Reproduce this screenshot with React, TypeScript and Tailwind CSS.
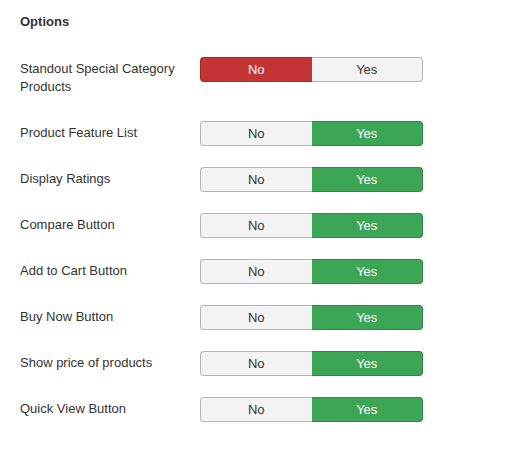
import React from "react";

type Row = { label: string; value: boolean };

const rows: Row[] = [
  { label: "Standout Special Category Products", value: false },
  { label: "Product Feature List", value: true },
  { label: "Display Ratings", value: true },
  { label: "Compare Button", value: true },
  { label: "Add to Cart Button", value: true },
  { label: "Buy Now Button", value: true },
  { label: "Show price of products", value: true },
  { label: "Quick View Button", value: true },
];

function Toggle({ value }: { value: boolean }) {
  return (
    <div className="flex w-[223px] h-[25px] text-[13px] leading-none">
      {value ? (
        <>
          <div className="flex-1 flex items-center justify-center pb-px bg-[#f3f3f3] text-[#333] border border-r-0 border-[#b5b5b5] rounded-l-[4px]">
            No
          </div>
          <div className="flex-1 flex items-center justify-center pb-px bg-[#3ca556] text-white border border-l-0 border-[#2f8a45] rounded-r-[4px]">
            Yes
          </div>
        </>
      ) : (
        <>
          <div className="flex-1 flex items-center justify-center pb-px bg-[#c33535] text-white border border-r-0 border-[#a82a2a] rounded-l-[4px]">
            No
          </div>
          <div className="flex-1 flex items-center justify-center pb-px bg-[#f3f3f3] text-[#333] border border-l-0 border-[#b5b5b5] rounded-r-[4px]">
            Yes
          </div>
        </>
      )}
    </div>
  );
}

export default function App() {
  return (
    <div
      className="w-[521px] h-[461px] bg-white text-[#333] px-5 pt-[13px]"
      style={{ fontFamily: '"Liberation Sans", Arial, sans-serif' }}
    >
      <div className="text-[13px] leading-[18px] font-bold">Options</div>
      <div className="mt-[26px] flex flex-col">
        {rows.map((r, i) => (
          <div
            key={r.label}
            className={`flex items-start ${i === 0 ? "mb-[25px]" : "mb-[21px]"}`}
          >
            <div className="w-[180px] pr-4 pt-[3px] text-[13px] leading-[18px]">
              {r.label}
            </div>
            <Toggle value={r.value} />
          </div>
        ))}
      </div>
    </div>
  );
}
